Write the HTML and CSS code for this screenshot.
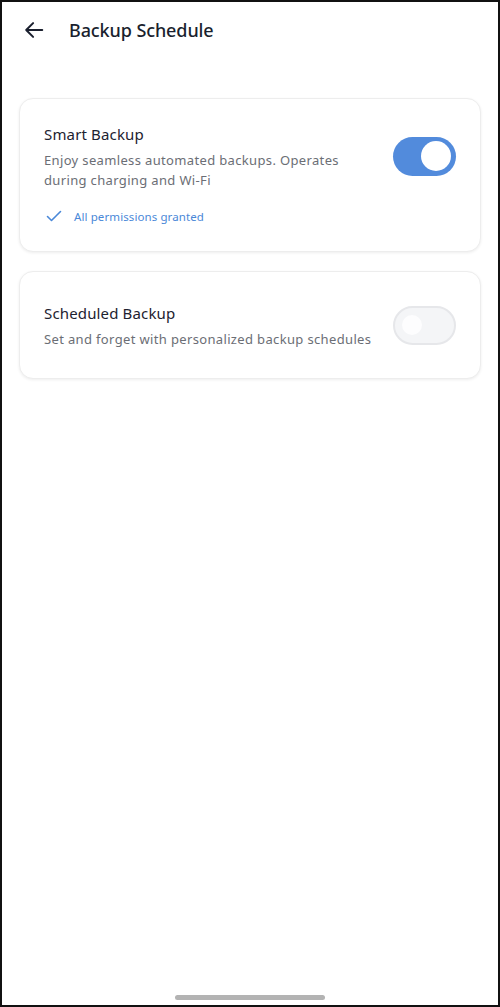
FILE: index.html
```html
<!DOCTYPE html>
<html lang="en">
<head>
<meta charset="utf-8">
<title>Backup Schedule</title>
<link rel="stylesheet" href="styles.css">
</head>
<body>
<div class="screen">
  <header class="topbar">
    <svg class="back" width="22" height="22" viewBox="0 0 24 24" aria-hidden="true">
      <path d="M21 12H3.5M11 4.5L3.5 12L11 19.5" fill="none" stroke="#1a1f2e" stroke-width="2.2" stroke-linecap="round" stroke-linejoin="round"/>
    </svg>
    <h1 class="title">Backup Schedule</h1>
  </header>

  <main class="content">
    <section class="card card-smart">
      <div class="row">
        <div class="text">
          <div class="card-title">Smart Backup</div>
          <div class="card-desc">Enjoy seamless automated backups. Operates during charging and Wi-Fi</div>
        </div>
        <div class="toggle toggle-on"><span class="knob"></span></div>
      </div>
      <div class="perm">
        <svg class="check" width="16" height="12" viewBox="0 0 16 12" aria-hidden="true">
          <path d="M1.5 6.5L5.5 10.5L14.5 1.5" fill="none" stroke="#4a88d8" stroke-width="1.6" stroke-linecap="round" stroke-linejoin="round"/>
        </svg>
        <span>All permissions granted</span>
      </div>
    </section>

    <section class="card card-scheduled">
      <div class="row">
        <div class="text">
          <div class="card-title">Scheduled Backup</div>
          <div class="card-desc">Set and forget with personalized backup schedules</div>
        </div>
        <div class="toggle toggle-off"><span class="knob"></span></div>
      </div>
    </section>
  </main>

  <div class="home-bar"></div>
</div>
</body>
</html>
```

FILE: styles.css
```css
* { box-sizing: border-box; }
html, body { margin: 0; padding: 0; }
body {
  background: #fff;
  font-family: "Noto Sans", "Open Sans", sans-serif;
  color: #1d2230;
}
.screen {
  width: 500px;
  height: 1007px;
  border: 2px solid #111;
  background: #fff;
  display: flex;
  flex-direction: column;
}
.topbar {
  height: 56px;
  display: flex;
  align-items: center;
  padding-left: 21px;
  gap: 24px;
}
.back { display: block; }
.title {
  margin: 0;
  font-size: 18px;
  font-weight: 500;
  color: #1a1f2e;
  letter-spacing: -0.1px;
}
.content {
  flex: 1;
  padding: 40px 17px 0;
  display: flex;
  flex-direction: column;
  gap: 19px;
}
.card {
  background: #fff;
  border: 1px solid #ededed;
  border-radius: 14px;
  box-shadow: 0 1px 3px rgba(0,0,0,0.07);
  padding: 23px 24px 25px 24px;
}
.card-scheduled { padding-top: 23px; padding-bottom: 23px; }
.card-scheduled .row { padding: 6px 0; }
.row {
  display: flex;
  align-items: center;
  justify-content: space-between;
}
.text { width: 335px; }
.card-title {
  font-size: 15px;
  line-height: 24px;
  color: #1d2230;
  letter-spacing: 0.15px;
}
.card-desc {
  font-size: 13px;
  line-height: 20px;
  color: #6b6e75;
  margin-top: 4px;
  letter-spacing: 0.35px;
}
.card-smart .card-desc { width: 320px; }
.toggle {
  width: 63px;
  height: 39px;
  border-radius: 20px;
  display: flex;
  align-items: center;
  flex-shrink: 0;
}
.toggle-on {
  background: #528bdc;
  justify-content: flex-end;
  padding-right: 5px;
}
.toggle-on .knob {
  width: 30px;
  height: 30px;
  border-radius: 50%;
  background: #fff;
}
.toggle-off {
  background: #f4f5f7;
  border: 2px solid #e6e7ea;
  padding-left: 7px;
}
.toggle-off .knob {
  width: 20px;
  height: 20px;
  border-radius: 50%;
  background: #fdfdfe;
}
.perm {
  margin-top: 16px;
  height: 20px;
  display: flex;
  align-items: center;
  gap: 12px;
  padding-left: 2px;
  font-size: 11.5px;
  color: #4a88d8;
  letter-spacing: 0.1px;
}
.check { display: block; }
.home-bar {
  align-self: center;
  width: 150px;
  height: 5px;
  border-radius: 3px;
  background: #b3b3b3;
  margin-bottom: 5px;
}
```
